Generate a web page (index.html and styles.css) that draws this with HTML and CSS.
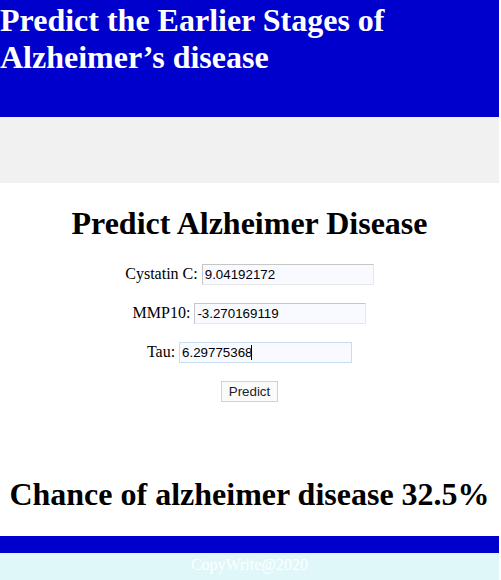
FILE: index.html
```html
<!DOCTYPE html>
<html lang="en">
<head>
<meta charset="utf-8">
<title>Predict Alzheimer Disease</title>
<link rel="stylesheet" href="styles.css">
</head>
<body>
<div class="page">
  <header class="top">
    <h1 class="site-title">Predict the Earlier Stages of Alzheimer’s disease</h1>
  </header>
  <div class="band"></div>
  <main class="content">
    <h1 class="title">Predict Alzheimer Disease</h1>
    <form class="form">
      <div class="row"><label class="lbl" for="cys">Cystatin C:</label><input class="field" id="cys" type="text" value="9.04192172"></div>
      <div class="row"><label class="lbl" for="mmp">MMP10:</label><input class="field" id="mmp" type="text" value="-3.270169119"></div>
      <div class="row"><label class="lbl" for="tau">Tau:</label><span class="field-wrap"><input class="field field-focus" id="tau" type="text" value="6.29775368"><span class="caret"></span></span></div>
      <button class="btn" type="button">Predict</button>
    </form>
    <h1 class="result">Chance of alzheimer disease 32.5%</h1>
  </main>
  <footer class="foot">
    <div class="foot-bar"></div>
    <p class="copy">CopyWrite@2020</p>
  </footer>
</div>
</body>
</html>
```

FILE: styles.css
```css
html, body {
  margin: 0;
  padding: 0;
  background: #ffffff;
}

body {
  font-family: "Liberation Serif", "Times New Roman", serif;
  font-size: 16px;
  color: #000;
}

.page {
  width: 499px;
}

.top {
  background: #0000cd;
  height: 117px;
  box-sizing: border-box;
  padding-top: 2px;
}

.site-title {
  margin: 0;
  font-size: 32px;
  font-weight: bold;
  color: #ffffff;
  line-height: 37px;
}

.band {
  background: #f1f1f1;
  height: 66px;
}

.content {
  text-align: center;
}

.title {
  margin: 22px 0 22px;
  font-size: 32px;
  line-height: 37px;
  font-weight: bold;
}

.form {
  display: flex;
  flex-direction: column;
  align-items: center;
  gap: 18px;
  margin: 0 0 74px;
}

.row {
  display: flex;
  align-items: baseline;
  gap: 4px;
  height: 21px;
}

.lbl {
  font-size: 16px;
}

.field-wrap {
  position: relative;
  display: inline-block;
}

.field {
  box-sizing: border-box;
  width: 172px;
  height: 21px;
  padding: 1px 2px;
  margin: 0;
  border: 1px solid;
  border-color: #c6c6c6 #e8e8e8 #e8e8e8 #c6c6c6;
  background: #f8faff;
  font-family: "Liberation Sans", Arial, sans-serif;
  font-size: 13.33px;
  color: #000;
  outline: none;
}

.field-focus {
  width: 173px;
  border-color: #c5dcf3;
}

.caret {
  position: absolute;
  left: 72px;
  top: 3px;
  width: 1px;
  height: 15px;
  background: #000;
}

.btn {
  box-sizing: border-box;
  height: 21px;
  width: 57px;
  padding: 0 6px;
  margin: 0;
  border: 1px solid #d2d2d2;
  background: #fbfbfb;
  font-family: "Liberation Sans", Arial, sans-serif;
  font-size: 13.33px;
  color: #222;
  border-radius: 0;
}

.result {
  margin: 0 0 23px;
  font-size: 32px;
  line-height: 37px;
  font-weight: bold;
}

.foot-bar {
  background: #0000cd;
  height: 17px;
}

.copy {
  margin: 0;
  background: #e0f7fa;
  height: 40px;
  padding-top: 3px;
  text-align: center;
  color: #ffffff;
  font-size: 16px;
}
```
